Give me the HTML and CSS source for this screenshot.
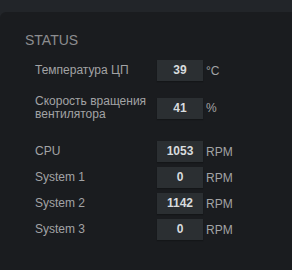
FILE: index.html
```html
<!DOCTYPE html>
<html lang="en">
<head>
    <meta charset="UTF-8">
    <title>Status</title>
    <link rel="stylesheet" href="styles.css">
</head>
<body>
<div class="panel">
    <h3 class="panel-title">STATUS</h3>
    <div class="group">
        <div class="row">
            <span class="label">Температура ЦП</span>
            <span class="value">39</span>
            <span class="unit">°C</span>
        </div>
        <div class="row row-tall">
            <span class="label">Скорость вращения вентилятора</span>
            <span class="value">41</span>
            <span class="unit">%</span>
        </div>
    </div>
    <div class="group fans">
        <div class="row">
            <span class="label">CPU</span>
            <span class="value">1053</span>
            <span class="unit">RPM</span>
        </div>
        <div class="row">
            <span class="label">System 1</span>
            <span class="value">0</span>
            <span class="unit">RPM</span>
        </div>
        <div class="row">
            <span class="label">System 2</span>
            <span class="value">1142</span>
            <span class="unit">RPM</span>
        </div>
        <div class="row">
            <span class="label">System 3</span>
            <span class="value">0</span>
            <span class="unit">RPM</span>
        </div>
    </div>
</div>
</body>
</html>
```

FILE: styles.css
```css
body {
    margin: 0;
    height: 270px;
    overflow: hidden;
    background-color: #222529;
    font-family: "Liberation Sans", Arial, sans-serif;
}

.panel {
    margin-top: 12px;
    height: 258px;
    padding: 20px 0 0 25px;
    box-sizing: border-box;
    background-color: #1a1c1f;
    border-radius: 6px 0 0 0;
}

.panel-title {
    margin: 0 0 12px;
    font-size: 14px;
    line-height: 16px;
    font-weight: normal;
    color: #8c8d8f;
}

.group {
    display: flex;
    flex-direction: column;
    gap: 5px;
    padding-left: 10px;
}

.row {
    display: grid;
    grid-template-columns: 119px 46px auto;
    column-gap: 3px;
    align-items: center;
}

.row-tall {
    margin-top: 9px;
}

.fans {
    margin-top: 20px;
}

.label {
    font-size: 12px;
    line-height: 13px;
    color: #a2a3a5;
}

.value {
    height: 21px;
    line-height: 21px;
    text-align: center;
    font-size: 12px;
    font-weight: bold;
    color: #d8dcde;
    background-color: #2b2f32;
    box-shadow: 0 1px 1px #141618;
}

.unit {
    font-size: 12px;
    color: #a2a3a5;
}
```
